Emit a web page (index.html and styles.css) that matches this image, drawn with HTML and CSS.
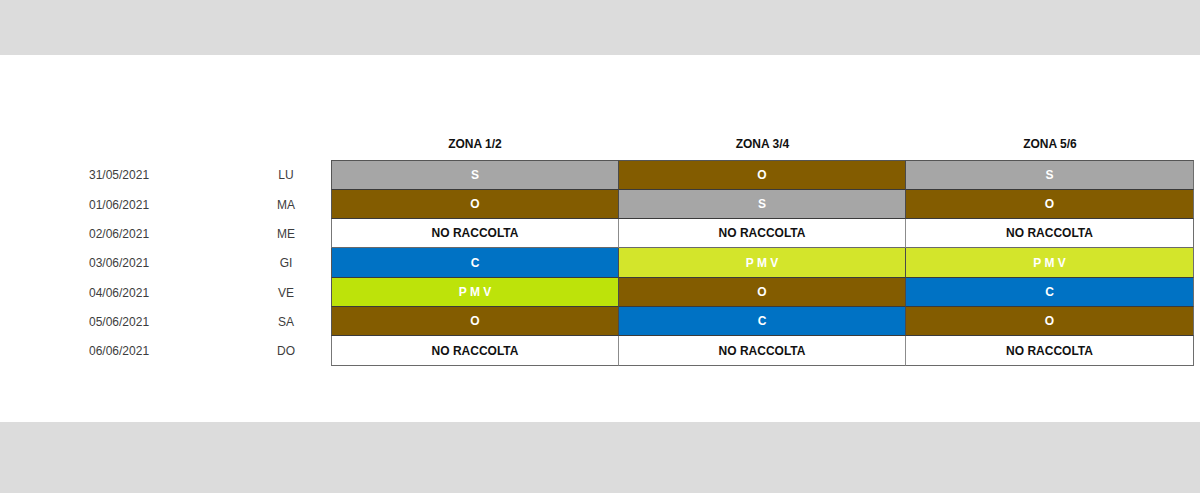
FILE: index.html
```html
<!DOCTYPE html>
<html lang="it">
<head>
<meta charset="utf-8">
<title>Calendario raccolta</title>
<link rel="stylesheet" href="styles.css">
</head>
<body>
<div class="band band-top"></div>
<main class="content">
  <div class="sched">
    <div class="row head">
      <div></div>
      <div></div>
      <div class="zh">ZONA 1/2</div>
      <div class="zh">ZONA 3/4</div>
      <div class="zh">ZONA 5/6</div>
    </div>
    <div class="row first">
      <div class="date">31/05/2021</div><div class="day">LU</div>
      <div class="z s">S</div><div class="z o">O</div><div class="z s">S</div>
    </div>
    <div class="row">
      <div class="date">01/06/2021</div><div class="day">MA</div>
      <div class="z o">O</div><div class="z s">S</div><div class="z o">O</div>
    </div>
    <div class="row">
      <div class="date">02/06/2021</div><div class="day">ME</div>
      <div class="z n">NO RACCOLTA</div><div class="z n">NO RACCOLTA</div><div class="z n">NO RACCOLTA</div>
    </div>
    <div class="row tall">
      <div class="date">03/06/2021</div><div class="day">GI</div>
      <div class="z c">C</div><div class="z p2">P M V</div><div class="z p2">P M V</div>
    </div>
    <div class="row">
      <div class="date">04/06/2021</div><div class="day">VE</div>
      <div class="z p1">P M V</div><div class="z o">O</div><div class="z c">C</div>
    </div>
    <div class="row">
      <div class="date">05/06/2021</div><div class="day">SA</div>
      <div class="z o">O</div><div class="z c">C</div><div class="z o">O</div>
    </div>
    <div class="row tall">
      <div class="date">06/06/2021</div><div class="day">DO</div>
      <div class="z n">NO RACCOLTA</div><div class="z n">NO RACCOLTA</div><div class="z n">NO RACCOLTA</div>
    </div>
  </div>
</main>
<div class="band band-bottom"></div>
</body>
</html>
```

FILE: styles.css
```css
* { box-sizing: border-box; }
html, body { margin: 0; padding: 0; }
body {
  width: 1200px;
  height: 493px;
  overflow: hidden;
  background: #ffffff;
  font-family: "Liberation Sans", Arial, sans-serif;
  font-size: 12px;
  display: flex;
  flex-direction: column;
}
.band { background: #dcdcdc; }
.band-top { height: 55px; }
.band-bottom { height: 71px; }
.content {
  height: 367px;
  padding: 82px 0 0 89px;
}
.row {
  display: grid;
  grid-template-columns: 173px 69px 288px 287px 288px;
  height: 29px;
}
.row.tall { height: 30px; }
.row.head {
  height: 23px;
  padding-bottom: 9px;
}
.row.first { height: 30px; }
.zh {
  text-align: center;
  font-weight: bold;
  line-height: 14px;
  color: #111;
}
.date, .day {
  display: flex;
  align-items: center;
  color: #3d3d3d;
}
.day {
  justify-content: center;
  padding-right: 21px;
}
.z {
  display: flex;
  align-items: center;
  justify-content: center;
  font-weight: bold;
  color: #ffffff;
  border-right: 1px solid #4a4a4a;
  border-bottom: 1px solid #3a3a3a;
}
.row .z:nth-child(3) { border-left: 1px solid #555; }
.row.first .z { border-top: 1px solid #555; }
.row .z:last-child { border-right-color: #6e6e6e; }
.s { background: #a6a6a6; }
.o { background: #835c00; }
.c { background: #0072c4; }
.p1 { background: #bde30a; }
.p2 { background: #d3e52b; }
.n {
  background: #ffffff;
  color: #111;
  border-right-color: #8c8c8c;
  border-bottom-color: #6a6a6a;
}
.row .n:nth-child(3) { border-left-color: #777; }
.row:last-child .z { border-bottom-color: #6a6a6a; }
```
